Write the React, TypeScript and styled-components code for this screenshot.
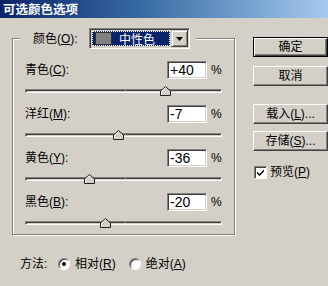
import React from "react";
import styled, { createGlobalStyle } from "styled-components";

const Global = createGlobalStyle`
  html, body { margin: 0; padding: 0; background: #d4d0c8; overflow: hidden; }
  body {
    font-family: "Liberation Sans", "Noto Sans CJK SC", sans-serif;
    font-size: 12px;
    color: #000;
  }
`;

const Dialog = styled.div`
  width: 328px;
  height: 286px;
  background: #d4d0c8;
  overflow: hidden;
  display: flex;
  flex-direction: column;
`;

const TitleBar = styled.div`
  height: 18px;
  flex-shrink: 0;
  background: linear-gradient(to right, #0a246a 0%, #3a6ea5 45%, #a6caf0 100%);
  color: #fff;
  font-family: "Noto Sans CJK SC", sans-serif;
  font-weight: bold;
  font-size: 12.5px;
  line-height: 18px;
  padding-left: 3px;
`;

const Body = styled.div`
  display: flex;
  padding-left: 12px;
`;

const LeftCol = styled.div`
  width: 226px;
  display: flex;
  flex-direction: column;
`;

const Group = styled.fieldset`
  margin: 10px 0 0;
  padding: 11px 12px 6px 12px;
  border: 1px solid #808080;
  box-shadow: inset 1px 1px #fff, 1px 1px #fff;
  min-width: 0;
`;

const Legend = styled.legend`
  display: flex;
  align-items: center;
  margin-left: -5px;
  padding: 0 6px 0 13px;
  background: #d4d0c8;
`;

const LegendLabel = styled.span`
  width: 56px;
  line-height: 14px;
`;

const Combo = styled.div`
  width: 97px;
  height: 17px;
  display: flex;
  padding: 1px;
  border: 1px solid;
  border-color: #808080 #fff #fff #808080;
  box-shadow: inset 1px 1px #404040, inset -1px -1px #d4d0c8;
`;

const ComboValue = styled.div`
  flex: 1;
  margin: 1px 1px 1px 1px;
  display: flex;
  align-items: center;
  background: #0a246a;
  outline: 1px dotted #fff;
  outline-offset: -1px;
  color: #fff;
  gap: 7px;
  padding-left: 3px;
`;

const Swatch = styled.div`
  width: 15px;
  height: 11px;
  background: #808080;
  border: 1px solid #303030;
`;

const ComboText = styled.span`
  font-family: "Noto Sans CJK SC", sans-serif;
  font-size: 12px;
  line-height: 13px;
`;

const DropButton = styled.div`
  width: 15px;
  height: 15px;
  display: flex;
  align-items: center;
  justify-content: center;
  background: #d4d0c8;
  border: 1px solid;
  border-color: #d4d0c8 #404040 #404040 #d4d0c8;
  box-shadow: inset 1px 1px #fff, inset -1px -1px #808080;
`;

const Block = styled.div`
  display: flex;
  flex-direction: column;
  & + & { margin-top: 8px; }
`;

const InputRow = styled.div`
  display: flex;
  align-items: center;
  height: 20px;
`;

const RowLabel = styled.span`
  flex: 1;
  line-height: 14px;
`;

const NumBox = styled.div`
  width: 36px;
  height: 16px;
  padding-left: 2px;
  background: #fff;
  border: 1px solid;
  border-color: #808080 #fff #fff #808080;
  box-shadow: inset 1px 1px #404040, inset -1px -1px #d4d0c8;
  font-family: "Liberation Sans", sans-serif;
  font-size: 14px;
  line-height: 17px;
`;

const Percent = styled.span`
  width: 11px;
  margin-left: 4px;
  font-size: 12px;
  line-height: 14px;
`;

const SliderRow = styled.div`
  position: relative;
  height: 10px;
  margin-top: 6px;
  padding-top: 3px;
  box-sizing: border-box;
`;

const Track = styled.div`
  position: relative;
  height: 2px;
  border: 1px solid;
  border-color: #808080 #fff #fff #808080;
  box-shadow: inset 1px 1px #404040;
  &::after {
    content: "";
    position: absolute;
    left: 99px;
    top: 0;
    width: 1px;
    height: 1px;
    background: #a0a0a0;
  }
`;

const Thumb = styled.svg`
  position: absolute;
  top: 0;
  width: 11px;
  height: 10px;
`;

const MethodRow = styled.div`
  display: flex;
  align-items: center;
  margin-top: 22px;
  padding-left: 8px;
  height: 14px;
`;

const MethodLabel = styled.span`
  width: 38px;
  line-height: 14px;
`;

const RadioItem = styled.label`
  display: flex;
  align-items: center;
  gap: 5px;
  margin-right: 13px;
  line-height: 14px;
`;

const RadioCircle = styled.span<{ $on?: boolean }>`
  width: 10px;
  height: 10px;
  border-radius: 50%;
  background: #fff;
  border: 1px solid;
  border-color: #808080 #fff #fff #808080;
  box-shadow: inset 1px 1px #404040;
  display: flex;
  align-items: center;
  justify-content: center;
  &::after {
    content: "";
    width: 4px;
    height: 4px;
    border-radius: 50%;
    background: ${(p) => (p.$on ? "#000" : "transparent")};
  }
`;

const RightCol = styled.div`
  margin-left: 18px;
  padding-top: 19px;
  display: flex;
  flex-direction: column;
`;

const Button = styled.div<{ $default?: boolean; $gap?: number }>`
  width: 75px;
  height: 20px;
  box-sizing: border-box;
  margin-top: ${(p) => p.$gap ?? 0}px;
  display: flex;
  align-items: center;
  justify-content: center;
  background: #d4d0c8;
  border: 1px solid;
  border-color: ${(p) => (p.$default ? "#000" : "#fff #404040 #404040 #fff")};
  box-shadow: ${(p) =>
    p.$default
      ? "inset 1px 1px #fff, inset -1px -1px #404040, inset -2px -2px #808080"
      : "inset -1px -1px #808080"};
  line-height: 14px;
`;

const CheckRow = styled.label`
  display: flex;
  align-items: center;
  gap: 3px;
  margin-top: 14px;
  margin-left: 1px;
  line-height: 14px;
`;

const CheckBox = styled.span`
  width: 11px;
  height: 11px;
  background: #fff;
  border: 1px solid;
  border-color: #808080 #fff #fff #808080;
  box-shadow: inset 1px 1px #404040;
  display: flex;
  align-items: center;
  justify-content: center;
`;

const U = styled.span`
  text-decoration: underline;
  text-underline-offset: 1px;
`;

const rows = [
  { name: "青色", key: "C", value: 40 },
  { name: "洋红", key: "M", value: -7 },
  { name: "黄色", key: "Y", value: -36 },
  { name: "黑色", key: "B", value: -20 },
];

const fmt = (v: number) => (v > 0 ? `+${v}` : `${v}`);

export default function App() {
  return (
    <Dialog>
      <Global />
      <TitleBar>可选颜色选项</TitleBar>
      <Body>
        <LeftCol>
          <Group>
            <Legend>
              <LegendLabel>
                颜色(<U>O</U>):
              </LegendLabel>
              <Combo>
                <ComboValue>
                  <Swatch />
                  <ComboText>中性色</ComboText>
                </ComboValue>
                <DropButton>
                  <svg width="7" height="4" viewBox="0 0 7 4">
                    <path d="M0 0h7L3.5 4z" fill="#000" />
                  </svg>
                </DropButton>
              </Combo>
            </Legend>
            {rows.map((r) => (
              <Block key={r.key}>
                <InputRow>
                  <RowLabel>
                    {r.name}(<U>{r.key}</U>):
                  </RowLabel>
                  <NumBox>{fmt(r.value)}</NumBox>
                  <Percent>%</Percent>
                </InputRow>
                <SliderRow>
                  <Track />
                  <Thumb viewBox="0 0 11 10" style={{ left: r.value + 100 - 5 }}>
                    <polygon
                      points="5.5,0.5 10.5,5 10.5,9.5 0.5,9.5 0.5,5"
                      fill="#d4d0c8"
                      stroke="#202020"
                    />
                    <polyline points="1.5,8.5 1.5,5.4 5.5,1.8" fill="none" stroke="#fff" />
                  </Thumb>
                </SliderRow>
              </Block>
            ))}
          </Group>
          <MethodRow>
            <MethodLabel>方法:</MethodLabel>
            <RadioItem>
              <RadioCircle $on />
              <span>
                相对(<U>R</U>)
              </span>
            </RadioItem>
            <RadioItem>
              <RadioCircle />
              <span>
                绝对(<U>A</U>)
              </span>
            </RadioItem>
          </MethodRow>
        </LeftCol>
        <RightCol>
          <Button $default>确定</Button>
          <Button $gap={9}>取消</Button>
          <Button $gap={18}>
            载入(<U>L</U>)...
          </Button>
          <Button $gap={7}>
            存储(<U>S</U>)...
          </Button>
          <CheckRow>
            <CheckBox>
              <svg width="9" height="9" viewBox="0 0 9 9">
                <path d="M1 3.5 L3.5 6 L8 1.5 V3.5 L3.5 8 L1 5.5 Z" fill="#000" />
              </svg>
            </CheckBox>
            <span>
              预览(<U>P</U>)
            </span>
          </CheckRow>
        </RightCol>
      </Body>
    </Dialog>
  );
}
